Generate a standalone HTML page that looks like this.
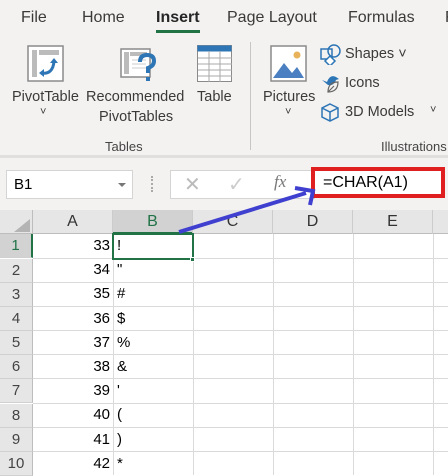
<!DOCTYPE html>
<html><head><meta charset="utf-8"><style>
*{margin:0;padding:0;box-sizing:border-box}
body{width:448px;height:475px;overflow:hidden;background:#fff;font-family:"Liberation Sans",Arial,sans-serif;position:relative;color:#262626}
.a{position:absolute;white-space:nowrap}
.t{font-size:16px;color:#3b3a39}
.l{font-size:14.5px;color:#3b3a39}
.cell{position:absolute;font-size:15px;color:#000}
.rh{position:absolute;left:0;width:33px;height:24px;background:#e6e6e6;border-bottom:1px solid #d0d0d0;border-right:1px solid #bdbdbd;text-align:center;font-size:15px;color:#444;line-height:24px}
</style></head><body>
<div class="a" style="left:0;top:0;width:448px;height:155px;background:#f3f2f1"></div>
<div class="a" style="left:0;top:155px;width:448px;height:3px;background:#e1dfdd"></div>
<div class="a" style="left:0;top:158px;width:448px;height:52px;background:#f3f2f1"></div>
<!-- tabs -->
<div class="a t" style="left:21px;top:9px">File</div>
<div class="a t" style="left:82px;top:9px">Home</div>
<div class="a t" style="left:156px;top:9px;font-weight:bold;color:#262626">Insert</div>
<div class="a" style="left:156px;top:30px;width:44px;height:3px;background:#217346"></div>
<div class="a t" style="left:227px;top:9px">Page Layout</div>
<div class="a t" style="left:348px;top:9px">Formulas</div>
<div class="a t" style="left:445px;top:9px">F</div>
<!-- pivot icon -->
<svg class="a" style="left:27px;top:45px" width="38" height="38"><rect x="1" y="1" width="35" height="35" fill="#fff" stroke="#8a8a8a" stroke-width="1.5"/><rect x="5" y="5" width="5" height="27" fill="#bbb"/><rect x="12" y="5" width="20" height="5" fill="#bbb"/><path d="M14 28 Q26 30 27 16" stroke="#2e75b6" stroke-width="3" fill="none"/><path d="M23 18 L27 13 L31 18Z M17 24 L12 28 L17 32Z" fill="#2e75b6"/></svg>
<div class="a l" style="left:12px;top:89px">PivotTable</div>
<div class="a l" style="left:40px;top:106px;font-size:11px">˅</div>
<!-- recommended -->
<svg class="a" style="left:120px;top:48px" width="40" height="38"><rect x="1" y="1" width="29" height="28" fill="#fff" stroke="#8a8a8a" stroke-width="1.5"/><rect x="4" y="4" width="5" height="22" fill="#bbb"/><rect x="10" y="4" width="17" height="4" fill="#bbb"/><path d="M12 12h14M12 16h14M12 20h14" stroke="#ccc"/><path d="M20 14 Q20 7 27 7 Q34 7 34 13 Q34 18 28 20 L28 25" stroke="#2e75b6" stroke-width="4" fill="none"/><rect x="26" y="29" width="4" height="4" fill="#2e75b6"/></svg>
<div class="a l" style="left:86px;top:89px">Recommended</div>
<div class="a l" style="left:99px;top:109px">PivotTables</div>
<!-- table -->
<svg class="a" style="left:197px;top:45px" width="36" height="38"><rect x="0.5" y="0.5" width="34" height="36" fill="#fff" stroke="#8a8a8a"/><rect x="0.5" y="0.5" width="34" height="6" fill="#2e75b6"/><path d="M1 13h34M1 19h34M1 25h34M1 31h34M12 6v31M23 6v31" stroke="#aaa"/></svg>
<div class="a l" style="left:197px;top:89px">Table</div>
<div class="a" style="left:105px;top:139px;font-size:13px;color:#444">Tables</div>
<div class="a" style="left:250px;top:42px;width:1px;height:108px;background:#c8c6c4"></div>
<!-- pictures -->
<svg class="a" style="left:270px;top:45px" width="38" height="38"><rect x="1" y="1" width="35" height="35" fill="#fff" stroke="#8a8a8a" stroke-width="1.5"/><circle cx="27" cy="10" r="3.5" fill="#e8b25a"/><path d="M3 33 L14 18 L22 28 L27 22 L34 33Z" fill="#4a7fc1"/></svg>
<div class="a l" style="left:263px;top:89px">Pictures</div>
<div class="a l" style="left:285px;top:106px;font-size:11px">˅</div>
<svg class="a" style="left:320px;top:43px" width="22" height="22"><rect x="1" y="6" width="11" height="10" fill="none" stroke="#2e75b6" stroke-width="1.5"/><circle cx="14" cy="8" r="6" fill="none" stroke="#2e75b6" stroke-width="1.5"/><path d="M10 13 L15 18 L10 23 L5 18Z" fill="#fff" stroke="#2e75b6" stroke-width="1.5"/></svg>
<div class="a l" style="left:345px;top:46px">Shapes ˅</div>
<svg class="a" style="left:320px;top:72px" width="22" height="22"><path d="M2 8 L7 10 Q10 2 16 5 L19 7 L16 8 Q14 14 8 13Z" fill="#2e75b6"/><path d="M8 20 Q8 10 18 10 Q18 20 8 20Z M8 20 L14 14" fill="none" stroke="#666" stroke-width="1.2"/></svg>
<div class="a l" style="left:345px;top:75px">Icons</div>
<svg class="a" style="left:320px;top:102px" width="22" height="22"><path d="M10 2 L18 6 L18 15 L10 19 L2 15 L2 6Z M2 6 L10 10 L18 6 M10 10 L10 19" fill="none" stroke="#2e75b6" stroke-width="1.5"/></svg>
<div class="a l" style="left:345px;top:104px">3D Models</div>
<div class="a l" style="left:430px;top:104px;font-size:11px">˅</div>
<div class="a" style="left:381px;top:139px;font-size:13px;color:#444">Illustrations</div>
<!-- formula bar -->
<div class="a" style="left:6px;top:170px;width:127px;height:29px;background:#fff;border:1px solid #d4d4d4;font-size:15px;color:#000;padding:5px 0 0 7px">B1</div>
<div class="a" style="left:118px;top:183px;width:0;height:0;border-left:4px solid transparent;border-right:4px solid transparent;border-top:4px solid #777"></div>
<div class="a" style="left:151px;top:176px;width:2px;height:16px;border-left:2px dotted #aaa"></div>
<div class="a" style="left:170px;top:170px;width:145px;height:29px;background:#fff;border:1px solid #d4d4d4"></div>
<div class="a" style="left:184px;top:172px;font-size:20px;color:#bbb">✕</div>
<div class="a" style="left:228px;top:172px;font-size:20px;color:#ccc">✓</div>
<div class="a" style="left:274px;top:172px;font-size:17px;color:#777;font-family:'Liberation Serif',serif;font-style:italic">fx</div>
<div class="a" style="left:311px;top:167px;width:134px;height:31px;background:#fff;border:4px solid #e02020;font-size:16px;color:#000;padding:3px 0 0 8px">=CHAR(A1)</div>
<!-- column headers -->
<div class="a" style="left:0;top:210px;width:448px;height:24px;background:#e6e6e6;border-bottom:1px solid #bdbdbd"></div>
<div class="a" style="left:0;top:210px;width:33px;height:24px;border-right:1px solid #bdbdbd"></div>
<div class="a" style="left:14px;top:219px;width:0;height:0;border-left:16px solid transparent;border-bottom:13px solid #b4b4b4"></div>
<div class="a" style="left:113px;top:210px;width:80px;height:24px;background:#d2d2d2;border-bottom:2px solid #217346"></div>
<div class="a" style="left:33px;top:210px;width:80px;height:24px;border-right:1px solid #ccc;text-align:center;font-size:16px;line-height:24px;color:#333">A</div>
<div class="a" style="left:113px;top:210px;width:80px;height:24px;border-right:1px solid #ccc;text-align:center;font-size:16px;line-height:24px;color:#217346">B</div>
<div class="a" style="left:193px;top:210px;width:80px;height:24px;border-right:1px solid #ccc;text-align:center;font-size:16px;line-height:24px;color:#333">C</div>
<div class="a" style="left:273px;top:210px;width:80px;height:24px;border-right:1px solid #ccc;text-align:center;font-size:16px;line-height:24px;color:#333">D</div>
<div class="a" style="left:353px;top:210px;width:80px;height:24px;border-right:1px solid #ccc;text-align:center;font-size:16px;line-height:24px;color:#333">E</div>
<!-- grid -->
<svg class="a" style="left:0;top:234px" width="448" height="241">
<g stroke="#dadada" stroke-width="1">
<line x1="113.5" y1="0" x2="113.5" y2="241"/><line x1="193.5" y1="0" x2="193.5" y2="241"/><line x1="273.5" y1="0" x2="273.5" y2="241"/><line x1="353.5" y1="0" x2="353.5" y2="241"/><line x1="433.5" y1="0" x2="433.5" y2="241"/>
<line x1="33" y1="24.5" x2="448" y2="24.5"/><line x1="33" y1="48.5" x2="448" y2="48.5"/><line x1="33" y1="72.5" x2="448" y2="72.5"/><line x1="33" y1="96.5" x2="448" y2="96.5"/><line x1="33" y1="120.5" x2="448" y2="120.5"/><line x1="33" y1="144.5" x2="448" y2="144.5"/><line x1="33" y1="169.5" x2="448" y2="169.5"/><line x1="33" y1="193.5" x2="448" y2="193.5"/><line x1="33" y1="217.5" x2="448" y2="217.5"/>
</g></svg>
<div class="rh" style="top:234px;background:#d2d2d2;color:#217346;border-right:2px solid #217346">1</div>
<div class="rh" style="top:259px">2</div><div class="rh" style="top:283px">3</div><div class="rh" style="top:307px">4</div><div class="rh" style="top:331px">5</div><div class="rh" style="top:355px">6</div><div class="rh" style="top:379px">7</div><div class="rh" style="top:404px">8</div><div class="rh" style="top:428px">9</div><div class="rh" style="top:452px">10</div>
<div style="position:absolute;left:33px;top:234px;width:77px;font-size:15px;text-align:right;line-height:24.2px;color:#000">33<br>34<br>35<br>36<br>37<br>38<br>39<br>40<br>41<br>42</div>
<div style="position:absolute;left:117px;top:234px;font-size:15px;line-height:24.2px;color:#000">!<br>"<br>#<br>$<br>%<br>&amp;<br>'<br>(<br>)<br>*</div>
<div class="a" style="left:112px;top:233px;width:82px;height:27px;border:2px solid #217346"></div>
<div class="a" style="left:190px;top:257px;width:5px;height:5px;background:#217346;border:1px solid #fff"></div>
<!-- arrow -->
<svg class="a" style="left:0;top:0" width="448" height="475"><path d="M179 232 L306 193" stroke="#4040d0" stroke-width="4" fill="none"/><path d="M295 188 L313 191 L310 205" stroke="#4040d0" stroke-width="4" fill="none"/></svg>
</body></html>
